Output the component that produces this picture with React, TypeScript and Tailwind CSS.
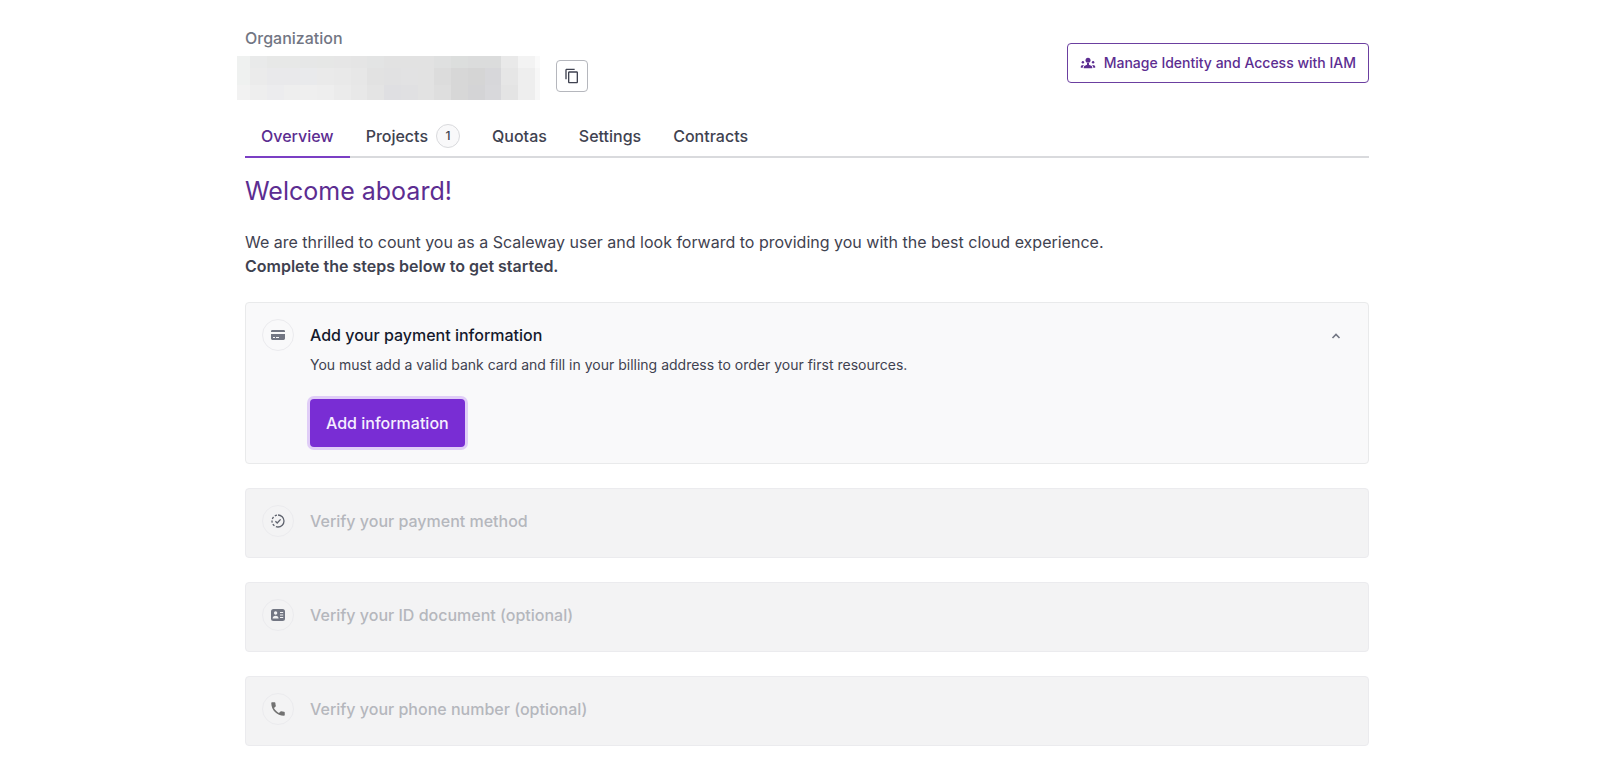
import React from "react";
import { MdOutlineContentCopy, MdPhone } from "react-icons/md";

const mosaic: string[][] = [
  ["#eff1f0","#e9eaea","#e7e8e7","#e7e8e7","#e6e7e7","#e6e7e6","#e6e6e6","#e5e5e5","#e3e4e4","#e2e2e2","#e2e2e2","#e2e2e2","#dfe0e0","#dcdedd","#dbdcdc","#dbdcdc","#e9e9e9","#f3f3f3","#fafafa"],
  ["#eff1f0","#ebebeb","#e9e9eb","#e9e9eb","#e9eaec","#eaeaea","#e9e9e9","#e7e7e7","#e2e2e2","#e1e1e2","#e2e2e3","#e2e2e2","#dcdcdc","#d7d7d7","#d5d5d5","#d7d7da","#e6e6e6","#eeeeee","#f7f7f7"],
  ["#f2f2f2","#eeeeee","#ececee","#eeeeee","#efefef","#eeeeee","#ebebeb","#e8e8e8","#e4e4e4","#dfdfe2","#e0e0e2","#e2e2e2","#dedede","#d7d7d7","#d4d4d6","#d8d8db","#e4e4e4","#eeeeee","#f7f7f7"],
];

const tabs = ["Overview", "Projects", "Quotas", "Settings", "Contracts"];

function IamIcon() {
  return (
    <svg viewBox="0 0 16 16" className="size-4" fill="currentColor" aria-hidden="true">
      <circle cx="8" cy="5.2" r="2.5" />
      <path d="M3.700 13.200v-.7c0-1 .6-1.600 1.700-2l1.600-.8V8h2v1.700l1.600.8c1.100.4 1.700 1 1.700 2v.7z" />
      <circle cx="2.900" cy="7.300" r="1.200" />
      <circle cx="13.100" cy="7.300" r="1.200" />
      <path d="M.8 12.800v-1c0-1.200.9-1.900 2.500-1.900l.7.1c-.8.700-1.200 1.400-1.200 2.300v.5zM15.200 12.800v-1c0-1.200-.9-1.900-2.500-1.900l-.7.1c.8.700 1.200 1.400 1.200 2.300v.5z" />
    </svg>
  );
}

function CardIcon() {
  return (
    <svg viewBox="0 0 16 16" className="size-4" fill="#727683" aria-hidden="true">
      <path d="M2.200 3h11.600A1.200 1.200 0 0 1 15 4.200V5H1v-.8A1.200 1.200 0 0 1 2.200 3z" />
      <path fillRule="evenodd" d="M1 7h14v4.600a1.400 1.400 0 0 1-1.400 1.400H2.400A1.400 1.400 0 0 1 1 11.600zM3 10v1h2v-1zm3 0v1h3v-1z" />
    </svg>
  );
}

function ProgressCheckIcon() {
  return (
    <svg viewBox="0 0 16 16" className="size-4" fill="none" stroke="#5f636e" strokeWidth="1.300" aria-hidden="true">
      <path d="M8 2a6 6 0 0 1 0 12" />
      <path d="M8 14A6 6 0 0 1 8 2" strokeDasharray="2.200 1.570" />
      <path d="M5.400 8.200 7.200 10l3.400-3.600" />
    </svg>
  );
}

function IdIcon() {
  return (
    <svg viewBox="0 0 16 16" className="size-4" aria-hidden="true">
      <rect x="1" y="2" width="14" height="12" rx="2.500" fill="#727683" />
      <g fill="#f3f3f4">
        <circle cx="5.600" cy="6" r="1.700" />
        <path d="M2.600 11.600c0-1.900 1.300-2.900 3-2.900s3 1 3 2.900z" />
        <rect x="10" y="5" width="3.200" height="1" />
        <rect x="10" y="7.500" width="3.200" height="1" />
        <rect x="10" y="10" width="3.200" height="1" />
      </g>
    </svg>
  );
}

function StepIcon({ children }: { children: React.ReactNode }) {
  return (
    <span className="flex size-8 shrink-0 items-center justify-center rounded-full border border-[#ebebee]">
      {children}
    </span>
  );
}

function LockedStep({ icon, title }: { icon: React.ReactNode; title: string }) {
  return (
    <section className="flex items-start gap-4 rounded border border-[#ebebee] bg-[#f3f3f4] px-4 pt-4 pb-5">
      <StepIcon>{icon}</StepIcon>
      <h2 className="text-base leading-8 font-medium text-[#b5b7bd]">{title}</h2>
    </section>
  );
}

export default function App() {
  return (
    <main className="min-h-screen bg-white pt-[26px] pr-[234px] pb-8 pl-[245px] font-['Inter',sans-serif] text-[#3f4250]">
      <header className="flex items-start justify-between">
        <div>
          <p className="text-base leading-6 font-medium text-[#727683]">Organization</p>
          <div className="mt-1.5 flex items-center gap-4">
            <div
              role="img"
              aria-label="Organization name hidden"
              className="-ml-2 grid h-11 w-[303px] grid-cols-[13px_repeat(17,1fr)_5px] grid-rows-[12px_17px_15px]"
            >
              {mosaic.flat().map((color, i) => (
                <span key={i} style={{ backgroundColor: color }} />
              ))}
            </div>
            <button
              type="button"
              aria-label="Copy organization name"
              className="-mt-1 flex size-8 items-center justify-center rounded border border-[#b5b7bd] text-[#3f4250]"
            >
              <MdOutlineContentCopy className="size-4" />
            </button>
          </div>
        </div>
        <button
          type="button"
          className="mt-[17px] flex h-10 items-center gap-2 rounded border border-[#6b3fa0] px-3 text-sm font-medium text-[#5c2d91]"
        >
          <IamIcon />
          Manage Identity and Access with IAM
        </button>
      </header>

      <nav className="mt-4 flex border-b-2 border-[#d9dadd]">
        {tabs.map((tab, i) => (
          <a
            key={tab}
            href="#"
            className={
              i === 0
                ? "-mb-0.5 flex h-[42px] items-center border-b-2 border-[#7b3fc4] px-4 font-medium text-[#5c2d91]"
                : "flex h-10 items-center gap-2 px-4 font-medium"
            }
          >
            {tab}
            {tab === "Projects" && (
              <span className="flex size-6 items-center justify-center rounded-full border border-[#d9dadd] bg-[#f9f9fa] text-xs">
                1
              </span>
            )}
          </a>
        ))}
      </nav>

      <h1 className="mt-[17px] text-[25px] leading-8 text-[#5c2d91]">Welcome aboard!</h1>
      <p className="mt-[23px] text-base leading-6">
        We are thrilled to count you as a Scaleway user and look forward to providing you with the best cloud experience.
      </p>
      <p className="text-base leading-6 font-semibold">Complete the steps below to get started.</p>

      <div className="mt-6 flex flex-col gap-6">
        <section className="flex items-start gap-4 rounded border border-[#e9eaeb] bg-[#f9f9fa] p-4">
          <StepIcon>
            <CardIcon />
          </StepIcon>
          <div className="flex-1">
            <h2 className="text-base leading-8 font-medium text-[#151a2d]">Add your payment information</h2>
            <p className="mt-1 text-sm leading-5">
              You must add a valid bank card and fill in your billing address to order your first resources.
            </p>
            <button
              type="button"
              className="mt-6 h-12 rounded bg-[#792dd4] px-4 text-base font-medium text-[#f6eeff] ring-3 ring-[#e0cdf7]"
            >
              Add information
            </button>
          </div>
          <button type="button" aria-label="Collapse" className="flex size-8 items-center justify-center">
            <svg viewBox="0 0 10 10" className="size-2.5" fill="none" stroke="#727683" strokeWidth="1.600" aria-hidden="true">
              <path d="M1.500 8 5 4.500 8.500 8" />
            </svg>
          </button>
        </section>
        <LockedStep icon={<ProgressCheckIcon />} title="Verify your payment method" />
        <LockedStep icon={<IdIcon />} title="Verify your ID document (optional)" />
        <LockedStep icon={<MdPhone className="size-[18px] text-[#727272]" />} title="Verify your phone number (optional)" />
      </div>
    </main>
  );
}
